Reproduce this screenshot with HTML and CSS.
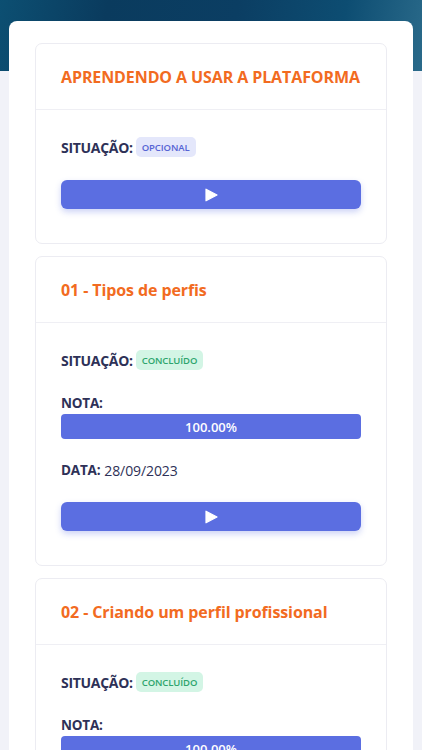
FILE: index.html
```html
<!DOCTYPE html>
<html lang="pt-BR">
<head>
<meta charset="utf-8">
<title>Curso</title>
<link rel="stylesheet" href="styles.css">
</head>
<body>
<main class="panel">
  <section class="card">
    <header class="card-head"><h2 class="card-title">APRENDENDO A USAR A PLATAFORMA</h2></header>
    <div class="card-body">
      <div class="row"><span class="label">SITUAÇÃO:</span><span class="badge badge-opt">OPCIONAL</span></div>
      <button class="play" type="button" aria-label="Assistir"><svg width="13" height="14" viewBox="0 0 13 14"><path d="M1 1.2 L12 7 L1 12.8 Z" fill="#fff" stroke="#fff" stroke-width="1.2" stroke-linejoin="round"/></svg></button>
    </div>
  </section>

  <section class="card">
    <header class="card-head"><h2 class="card-title">01 - Tipos de perfis</h2></header>
    <div class="card-body">
      <div class="row"><span class="label">SITUAÇÃO:</span><span class="badge badge-done">CONCLUÍDO</span></div>
      <div class="nota">
        <span class="label label-sm">NOTA:</span>
        <div class="bar">100.00%</div>
      </div>
      <div class="row date"><span class="label label-sm">DATA:</span><span class="date-val">28/09/2023</span></div>
      <button class="play" type="button" aria-label="Assistir"><svg width="13" height="14" viewBox="0 0 13 14"><path d="M1 1.2 L12 7 L1 12.8 Z" fill="#fff" stroke="#fff" stroke-width="1.2" stroke-linejoin="round"/></svg></button>
    </div>
  </section>

  <section class="card">
    <header class="card-head"><h2 class="card-title">02 - Criando um perfil profissional</h2></header>
    <div class="card-body">
      <div class="row"><span class="label">SITUAÇÃO:</span><span class="badge badge-done">CONCLUÍDO</span></div>
      <div class="nota">
        <span class="label label-sm">NOTA:</span>
        <div class="bar">100.00%</div>
      </div>
      <div class="row date"><span class="label label-sm">DATA:</span><span class="date-val">28/09/2023</span></div>
      <button class="play" type="button" aria-label="Assistir"><svg width="13" height="14" viewBox="0 0 13 14"><path d="M1 1.2 L12 7 L1 12.8 Z" fill="#fff" stroke="#fff" stroke-width="1.2" stroke-linejoin="round"/></svg></button>
    </div>
  </section>
</main>
</body>
</html>
```

FILE: styles.css
```css
* { box-sizing: border-box; }

html, body { margin: 0; padding: 0; }

body {
  font-family: "Open Sans", "Noto Sans", sans-serif;
  background:
    linear-gradient(100deg, #0c4f72 0%, #0a3b5e 25%, #0b3e63 55%, #0d4d72 80%, #2a6a8a 100%) top left / 100% 71px no-repeat,
    #f1f2f8;
  min-height: 750px;
  overflow: hidden;
}

.panel {
  margin: 21px 9px 0;
  background: #fff;
  border-radius: 8px 8px 0 0;
  padding: 22px 26px 0;
  min-height: 729px;
}

.card {
  border: 1px solid #ececf2;
  border-radius: 7px;
  margin-bottom: 12px;
  background: #fff;
}

.card-head {
  height: 66px;
  display: flex;
  align-items: center;
  padding: 0 25px;
  border-bottom: 1px solid #efeff4;
}

.card-title {
  margin: 0;
  font-size: 16px;
  font-weight: 700;
  color: #f26b21;
  letter-spacing: -0.1px;
}

.card-body {
  padding: 26px 25px 34px;
  display: flex;
  flex-direction: column;
}

.row {
  display: flex;
  align-items: center;
  height: 22px;
}

.label {
  font-size: 14px;
  font-weight: 700;
  color: #2e3157;
  margin-right: 3px;
  letter-spacing: -0.3px;
}

.label-sm { font-size: 13.5px; letter-spacing: -0.2px; margin-right: 4px; }

.badge {
  font-size: 9.5px;
  font-weight: 600;
  height: 20px;
  padding: 0 6px;
  border-radius: 5px;
  display: inline-flex;
  align-items: center;
  letter-spacing: -0.1px;
}

.badge-opt { background: #e4e7fb; color: #5664d4; }
.badge-done { background: #d3f5e5; color: #2da56d; }

.play {
  margin-top: 22px;
  height: 29px;
  border: 0;
  border-radius: 6px;
  background: #5b6ee1;
  box-shadow: 0 3px 6px rgba(91, 110, 225, 0.3);
  display: flex;
  align-items: center;
  justify-content: center;
  padding: 0;
}

.nota {
  margin-top: 23px;
  display: flex;
  flex-direction: column;
}

.nota .label { line-height: 18px; }

.bar {
  margin-top: 2px;
  height: 25px;
  border-radius: 4px;
  background: #5b6ee1;
  color: #fff;
  font-size: 13px;
  font-weight: 600;
  display: flex;
  align-items: center;
  justify-content: center;
}

.date { margin-top: 20px; }

.date-val {
  font-size: 14px;
  color: #2e3157;
  letter-spacing: -0.1px;
}

.date + .play { margin-top: 21px; }
```
